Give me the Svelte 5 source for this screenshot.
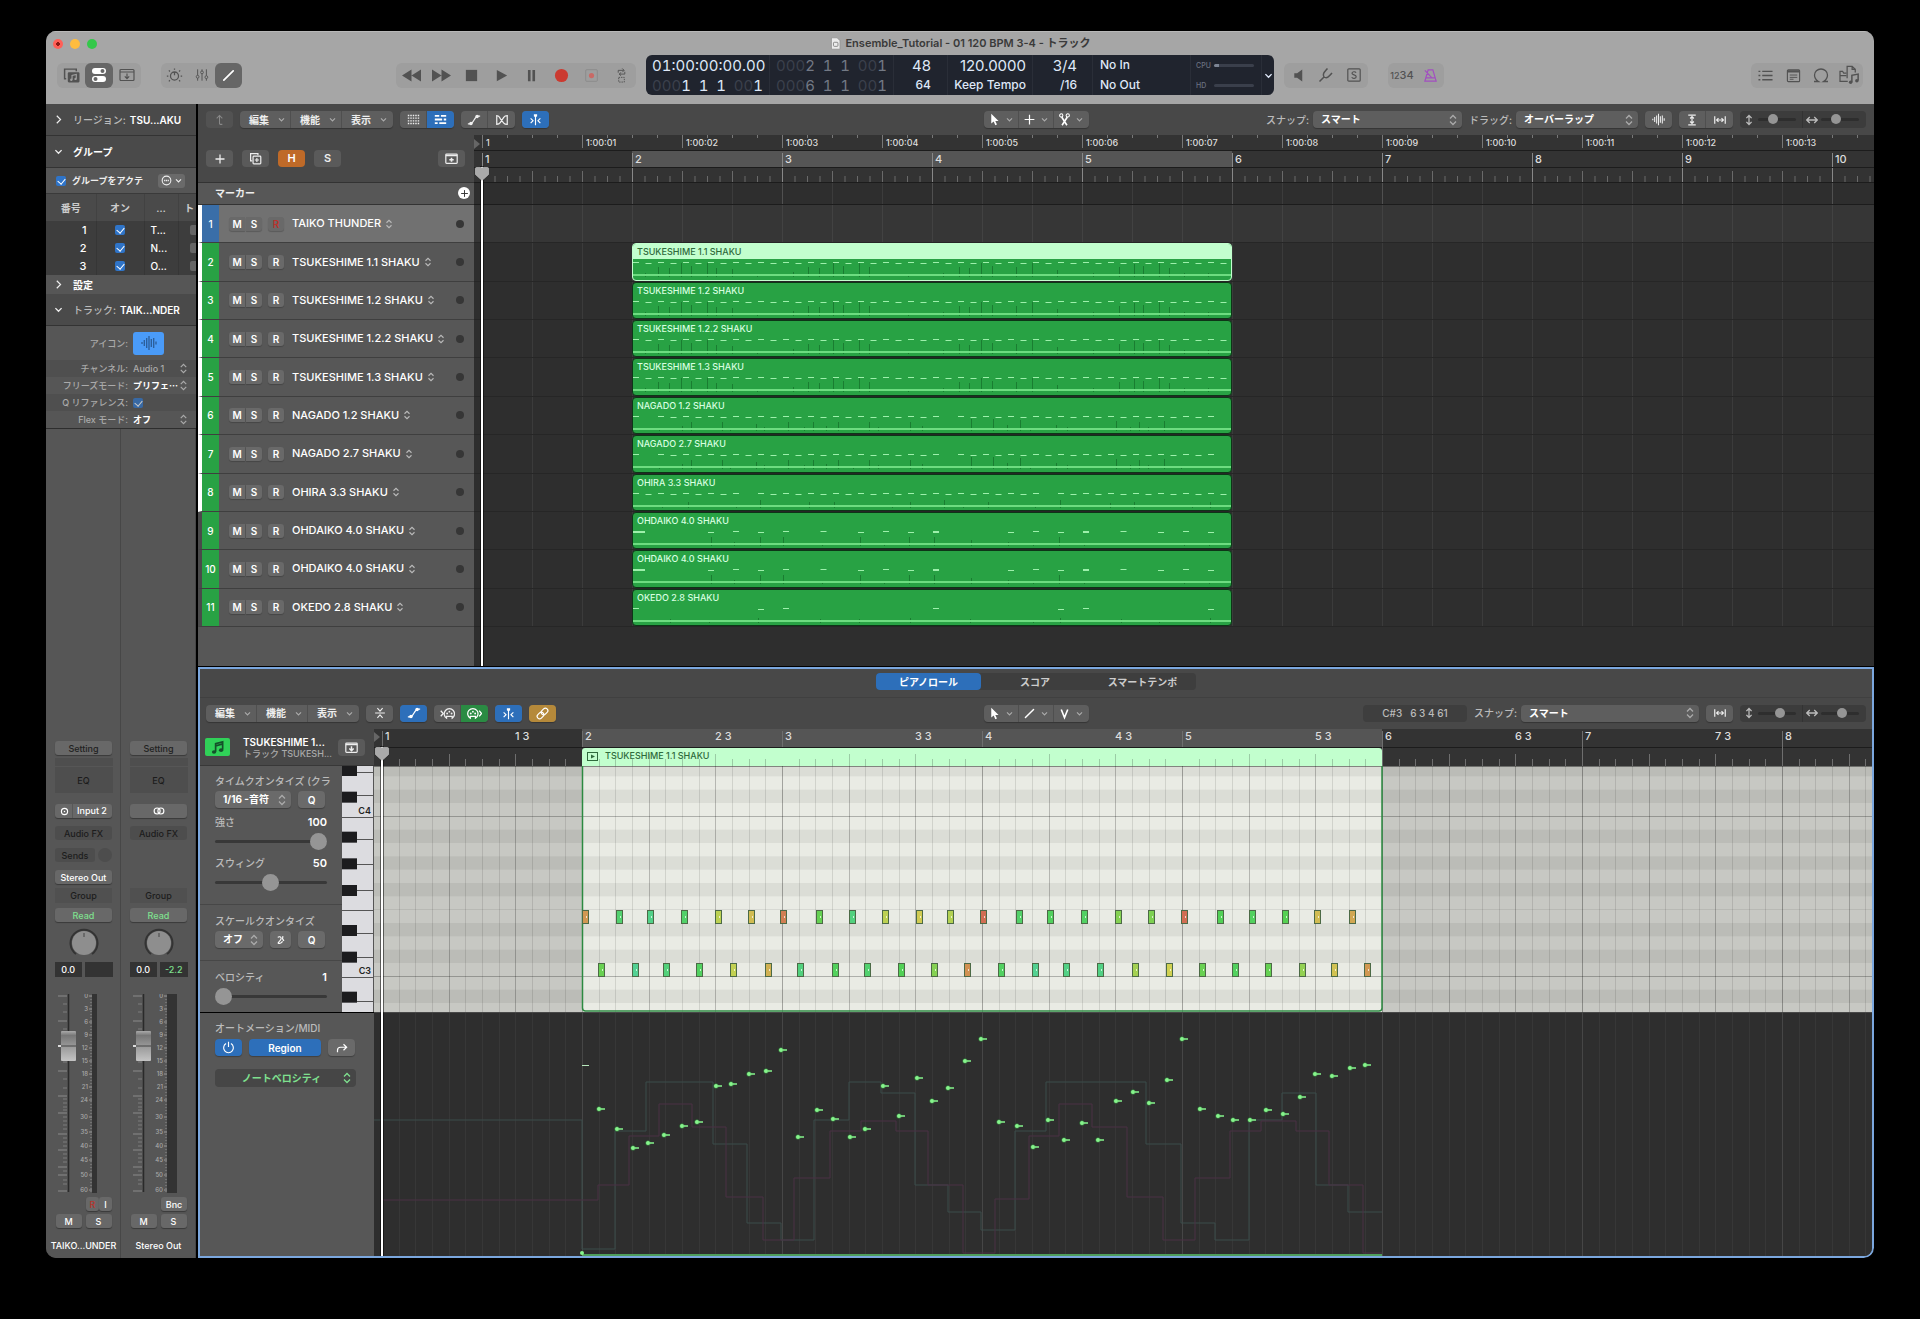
<script>
  // Arrange window: one beat is 50px, the first bar starts 8px into the lane
  const BEAT = 50;
  const ORIGIN = 8;
  // Piano roll: one bar is 200px
  const PR_BAR = 200;
  const PR_STEP = PR_BAR / 12;

  const range = (n) => Array.from({ length: n }, (_, i) => i);

  const icons = {
    chevDown: '<path d="M3.5 6l4.5 4.5L12.5 6" fill="none" stroke="currentColor" stroke-width="2"/>',
    chevRight: '<path d="M5.5 2.5L11 8l-5.5 5.5" fill="none" stroke="currentColor" stroke-width="1.7"/>',
    updown: '<path d="M4 6L8 2l4 4M4 10l4 4 4-4" fill="none" stroke="currentColor" stroke-width="1.7"/>',
    library: '<path d="M3 11H1.500V2h11v2" fill="none" stroke="currentColor" stroke-width="1.400"/><rect x="4.500" y="5" width="11" height="9.500" rx="1" fill="currentColor"/><path d="M8.500 12V8l4-1v4" fill="none" stroke="#a0a0a0" stroke-width="1.100"/><circle cx="7.800" cy="12" r="1.100" fill="#a0a0a0"/><circle cx="11.800" cy="11.200" r="1.100" fill="#a0a0a0"/>',
    inspector: '<rect x="1" y="1" width="14" height="6" rx="3" fill="currentColor"/><rect x="1" y="9" width="14" height="6" rx="3" fill="currentColor"/><circle cx="11.500" cy="4" r="2" fill="#666"/><circle cx="4.500" cy="12" r="2" fill="#666"/>',
    tray: '<rect x="1" y="2.500" width="14" height="11" rx="1" fill="none" stroke="currentColor" stroke-width="1.200"/><path d="M1 5h14M8 6.500v5M5.800 9.400L8 11.600l2.200-2.200" fill="none" stroke="currentColor" stroke-width="1.200"/>',
    dial: '<circle cx="8" cy="8.500" r="3.800" fill="none" stroke="currentColor" stroke-width="1.200"/><path d="M8 4.700v3M8 1.500v1.200M2.700 3.200l1 1M13.300 3.200l-1 1M.8 8.500h1.400M15.200 8.500h-1.400M2.700 13.500l1-1M13.300 13.500l-1-1" stroke="currentColor" stroke-width="1.200"/>',
    mixer: '<path d="M3 1.500v13M8 1.500v13M13 1.500v13" stroke="currentColor" stroke-width="1.100"/><g fill="#9e9e9e" stroke="currentColor"><circle cx="3" cy="10" r="1.600"/><circle cx="8" cy="5" r="1.600"/><circle cx="13" cy="10.500" r="1.600"/></g>',
    pencil: '<path d="M3 13L13 3" stroke="currentColor" stroke-width="1.800" stroke-linecap="round"/>',
    rewind: '<path d="M8 3v10L0 8zM16 3v10L8 8z" fill="currentColor"/>',
    forward: '<path d="M0 3v10l8-5zM8 3v10l8-5z" fill="currentColor"/>',
    stop: '<rect x="2" y="2" width="12" height="12" fill="currentColor"/>',
    play: '<path d="M3 2v12L14 8z" fill="currentColor"/>',
    pause: '<path d="M4.200 2h2.800v12H4.200zM9 2h2.800v12H9z" fill="currentColor"/>',
    record: '<circle cx="8" cy="8" r="7" fill="#cb3a30"/>',
    capture: '<rect x="1.800" y="1.800" width="12.400" height="12.400" rx="1" fill="none" stroke="#8b8b8b"/><circle cx="8" cy="8" r="2.800" fill="#c96a66"/>',
    cycle: '<path d="M4.500 5V2.500h6M8.800.5l2 2-2 2M11.500 4v2.500h-6M7.500 4.800L5.500 6.500l2 1.700" fill="none" stroke="currentColor" stroke-width="1"/><rect x="5" y="10" width="6" height="5" fill="none" stroke="currentColor" stroke-dasharray="1.500 1"/>',
    speaker: '<path d="M3.500 5.500h3L12 1.500v13L6.500 10.500h-3z" fill="currentColor"/>',
    fork: '<path d="M1.500 14.500L6 10M6 10C4 7 6.500 5 9.500 1.500M6 10c3 2 5-.5 8-4" fill="none" stroke="currentColor" stroke-width="1.500"/>',
    solo: '<rect x="1.800" y="1.800" width="12.400" height="12.400" rx="1" fill="none" stroke="currentColor" stroke-width="1.200"/><path d="M10 5.700C9.300 4.200 6 4.500 6 6.300 6 8.400 10.200 7.400 10.200 9.700c0 2-3.700 2.200-4.400.4" fill="none" stroke="currentColor" stroke-width="1.200"/>',
    metronome: '<path d="M5.500 2h5l3.500 12H2zM3.300 10.500h9.400M2 2.500l7.500 8" fill="none" stroke="currentColor" stroke-width="1.300"/>',
    list: '<path d="M.5 3.500h2M.5 8h2M.5 12.500h2M4.500 3.500h11M4.500 8h11M4.500 12.500h11" stroke="currentColor" stroke-width="1.400"/>',
    note: '<rect x="1.500" y="2" width="13" height="12.500" rx="1" fill="none" stroke="currentColor" stroke-width="1.200"/><path d="M1.500 3.500h13" stroke="currentColor" stroke-width="2.400"/><path d="M4 7.500h8M4 10h8M4 12h4" stroke="currentColor"/>',
    loop: '<path d="M1 14.500h4.500c-2.500-1.500-4-3.500-4-6.500a6.500 6 0 0113 0c0 3-1.500 5-4 6.500H15" fill="none" stroke="currentColor" stroke-width="1.300"/>',
    browser: '<path d="M7 13H.8V5h2l1 1.500H6M.8 8.500H6" fill="none" stroke="currentColor" stroke-width="1"/><path d="M6.500 10.500V1h4l2.500 2.500V6M10.500 1v2.500H13" fill="none" stroke="currentColor" stroke-width="1"/><path d="M10.300 13.500V8.300l5-1v5" fill="none" stroke="currentColor" stroke-width="1.200"/><circle cx="9.300" cy="13.700" r="1.400" fill="currentColor"/><circle cx="14.300" cy="12.500" r="1.400" fill="currentColor"/>',
    up: '<path d="M11.500 14H9.500A1.500 1.500 0 018 12.500V3M4.500 6.500L8 3l3.500 3.500" fill="none" stroke="currentColor" stroke-width="1.300"/>',
    dots: '<path d="M1 3h14M1 6.300h14M1 9.700h14M1 13h14" stroke="currentColor" stroke-width="1.800" stroke-dasharray="1.800 1.250"/>',
    lines: '<path d="M1 3.500h5.500M8.500 3.500H15M1 8h9M12 8h3M1 12.500h3.500M6.500 12.500H15" stroke="currentColor" stroke-width="2.200"/>',
    curve: '<path d="M1 12.500h2.500C8 12.500 8 4 12.500 3.500H15" fill="none" stroke="currentColor" stroke-width="1.400"/><circle cx="4.500" cy="12" r="2" fill="currentColor"/><circle cx="11.500" cy="4" r="2" fill="currentColor"/>',
    flex: '<path d="M2 13V3c3 0 3 1.500 4 3.500l4 5c1 1.200 2 1.500 4 1.500V3c-2 0-3 .5-4 2l-4 6c-1 1.500-2 2-4 2z" fill="none" stroke="currentColor" stroke-width="1.400"/>',
    catch: '<path d="M6 1.500h4V4L8 5.500 6 4z" fill="currentColor"/><path d="M8 5v10M2 6.500L5 9.500 2 12.500M14 6.500l-3 3 3 3" fill="none" stroke="currentColor" stroke-width="1.400"/>',
    pointer: '<path d="M4 1v12l3-2.600L9 15l2-.9-2-4.400h4z" fill="currentColor"/>',
    cross: '<path d="M8 2v12M2 8h12" stroke="currentColor" stroke-width="1.500"/>',
    scissors: '<path d="M4.500 5L11 15M11.500 5L5 15" stroke="currentColor" stroke-width="2"/><g fill="none" stroke="currentColor" stroke-width="1.300"><circle cx="4" cy="3" r="2"/><circle cx="12" cy="3" r="2"/></g>',
    velTool: '<path d="M4 3l4 10 4-10" fill="none" stroke="currentColor" stroke-width="2"/>',
    wave: '<path d="M1 7v2M3.300 5v6M5.700 3v10M8 1v14M10.300 4v8M12.700 3v10M15 6.500v3" stroke="currentColor" stroke-width="1.300"/>',
    fitV: '<path d="M3 1.500h10M3 14.500h10M8 4v8M5.500 6L8 3.500 10.500 6M5.500 10L8 12.500l2.500-2.500" fill="none" stroke="currentColor" stroke-width="1.600"/>',
    fitH: '<path d="M1 3v10M15 3v10M3.500 8h9M6 5.500L3.500 8 6 10.500M10 5.500L12.500 8 10 10.500" fill="none" stroke="currentColor" stroke-width="1.600"/>',
    arrowV: '<path d="M8 2v12M4.500 5.500L8 2l3.500 3.500M4.500 10.500L8 14l3.500-3.500" fill="none" stroke="currentColor" stroke-width="1.700"/>',
    arrowH: '<path d="M1 8h14M5 4L1 8l4 4M11 4l4 4-4 4" fill="none" stroke="currentColor" stroke-width="1.700"/>',
    plus: '<path d="M8 2v12M2 8h12" stroke="currentColor" stroke-width="1.700"/>',
    duplicate: '<path d="M4 11H2V2h9v2" fill="none" stroke="currentColor" stroke-width="1.500"/><rect x="5" y="5" width="9.500" height="9.500" rx="1" fill="none" stroke="currentColor" stroke-width="1.500"/><path d="M9.700 7.300v5M7.200 9.800h5" stroke="currentColor" stroke-width="1.400"/>',
    trayUp: '<rect x="1" y="2.500" width="14" height="11.500" rx="1" fill="none" stroke="currentColor" stroke-width="1.500"/><path d="M1 4.500h14" stroke="currentColor" stroke-width="1.500"/><path d="M8 7v5M5.300 9.500h5.400" stroke="currentColor" stroke-width="2"/>',
    trayDown: '<rect x="1" y="2.500" width="14" height="11.500" rx="1" fill="none" stroke="currentColor" stroke-width="1.500"/><path d="M1 4.500h14" stroke="currentColor" stroke-width="1.500"/><path d="M8 6.500v5M5.300 9.200L8 12l2.700-2.800" fill="none" stroke="currentColor" stroke-width="1.800"/>',
    more: '<circle cx="8" cy="8" r="6.300" fill="none" stroke="currentColor" stroke-width="1.600"/><path d="M4.500 8h7" stroke="currentColor" stroke-width="2" stroke-dasharray="1.800 .8"/>',
    collapse: '<path d="M1.500 8h13M4.500 1.500L8 5.500l3.500-4M4.500 14.500L8 10.500l3.500 4" fill="none" stroke="currentColor" stroke-width="1.500"/>',
    midiIn: '<path d="M.8 5l2.700 3-2.700 3" fill="none" stroke="currentColor" stroke-width="1.400"/><path d="M7 13A5.500 5.500 0 1113 13V11H7z" fill="none" stroke="currentColor" stroke-width="1.300"/><circle cx="7.600" cy="8" r="1" fill="currentColor"/><circle cx="10" cy="6" r="1" fill="currentColor"/><circle cx="12.400" cy="8" r="1" fill="currentColor"/>',
    midiOut: '<path d="M13 5l2.500 3L13 11" fill="none" stroke="currentColor" stroke-width="1.400"/><path d="M3.500 13A5.500 5.500 0 119 13V11H3.500z" fill="none" stroke="currentColor" stroke-width="1.300"/><circle cx="4" cy="8" r="1" fill="currentColor"/><circle cx="6.300" cy="6" r="1" fill="currentColor"/><circle cx="8.700" cy="8" r="1" fill="currentColor"/>',
    link: '<g fill="none" stroke="currentColor" stroke-width="1.500" transform="rotate(-45 8 8)"><rect x="0" y="5" width="9" height="6" rx="3"/><rect x="7" y="5" width="9" height="6" rx="3"/></g>',
    power: '<path d="M5 3.200a6 6 0 106 0M8 1v6.500" fill="none" stroke="currentColor" stroke-width="1.400"/>',
    share: '<path d="M2 13.500V11c0-2.500 1.500-4 4-4h8M10 3l4.200 4L10 11" fill="none" stroke="currentColor" stroke-width="1.600"/>',
    stereo: '<g fill="none" stroke="currentColor" stroke-width="1.500"><circle cx="5.500" cy="8" r="4"/><circle cx="10.500" cy="8" r="4"/></g>',
    mono: '<circle cx="8" cy="8" r="5.500" fill="none" stroke="currentColor" stroke-width="2"/><circle cx="8" cy="8" r="1.300" fill="currentColor"/>',
    notes: '<path d="M6 12.500V4l7.500-2v8.500M6 6.300l7.500-2" fill="none" stroke="currentColor" stroke-width="1.800"/><ellipse cx="4.300" cy="12.800" rx="2.300" ry="1.900" fill="currentColor"/><ellipse cx="11.800" cy="10.800" rx="2.300" ry="1.900" fill="currentColor"/>',
    accent: '<path d="M4 5c2-2 5-1 5 1.500S6 10 4.500 13c2 1.500 6.500 0 6-3M11.500 3l-.5 4 2 3" fill="none" stroke="currentColor" stroke-width="1.600"/>',
    doc: '<path d="M3 1h7l3.500 3.500V15H3z" fill="#ececec" stroke="#8a8a8a" stroke-width=".8"/><rect x="5.500" y="6.500" width="5.500" height="5" rx="1" fill="none" stroke="#777"/>'
  };

  // mini-notes for region previews: [16th-note slot, low row, width]
  const all = range(48);
  const skip = (...gone) => all.filter((i) => !gone.includes(i));
  const alternate = (slots) => slots.map((s) => [s, s % 2]);
  const shime = {
    notes: alternate(all),
    ticks: [[12,4],[25,10],[36,9],[48,14],[58,11],[74,14],[83,9],[99,8],[124,2],[160,5],[175,10],[186,9],[200,14],[210,11],[226,14],[236,10],[275,3],[310,4],[326,10],[336,9],[348,14],[359,11],[383,10],[399,14],[424,7],[460,4],[486,10],[501,13],[510,11],[526,14],[536,9],[551,4],[575,4]]
  };
  const nagado = {
    notes: alternate(skip(1, 25, 47)),
    ticks: [[26,3],[49,5],[58,9],[89,9],[97,3],[123,7],[131,4],[155,9],[171,4],[180,9],[193,5],[205,9],[220,3],[236,9],[245,4],[277,9],[289,5],[338,12],[360,12],[374,6],[387,11],[397,3],[423,6],[434,4],[483,10],[497,4],[506,9],[515,4],[531,10],[548,3]]
  };
  const ohira = {
    notes: alternate(skip(9, 33)),
    ticks: [[29,3],[55,6],[103,3],[127,8],[176,6],[201,6],[259,3],[277,6],[311,8],[330,3],[355,6],[402,3],[427,8],[477,5],[501,6],[559,3],[577,6]]
  };
  const ohdaiko = {
    notes: [[0,0,12],[0,1,12],[6,1],[8,0],[10,1],[12,0],[15,0],[18,1],[20,0],[22,1],[24,0],[24,1],[30,1],[32,0],[34,1],[36,0],[36,1],[39,0],[42,1],[44,0],[46,1]],
    ticks: [[78,9],[101,4],[127,9],[150,9],[189,3],[227,9],[251,3],[276,9],[301,9],[338,6],[375,4],[400,3],[426,9],[451,2],[551,3],[576,3]]
  };
  const okedo = {
    notes: [[0,0],[10,1],[12,0],[24,0],[34,1],[36,0],[46,1]],
    ticks: [[37,4],[76,3],[125,5],[187,4],[226,4],[277,5],[337,4],[400,3],[427,5],[488,4],[526,3],[577,5]]
  };

  const tracks = [
    { name: 'TAIKO THUNDER', armed: true },
    { name: 'TSUKESHIME 1.1 SHAKU', region: shime },
    { name: 'TSUKESHIME 1.2 SHAKU', region: shime },
    { name: 'TSUKESHIME 1.2.2 SHAKU', region: shime },
    { name: 'TSUKESHIME 1.3 SHAKU', region: shime },
    { name: 'NAGADO 1.2 SHAKU', region: nagado },
    { name: 'NAGADO 2.7 SHAKU', region: nagado },
    { name: 'OHIRA 3.3 SHAKU', region: ohira },
    { name: 'OHDAIKO 4.0 SHAKU', region: ohdaiko },
    { name: 'OHDAIKO 4.0 SHAKU', region: ohdaiko },
    { name: 'OKEDO 2.8 SHAKU', region: okedo }
  ];

  // [start, velocity lane y]; notes alternate between E3 and C3
  const notes = [
    [200,52],[216,96],[234,116],[250,135],[265,130],[281,122],[299,113],[314,109],[333,73],[348,71],[366,61],[383,58],
    [398,37],[415,124],[434,97],[450,106],[467,124],[482,116],[500,73],[516,103],[534,65],[549,88],[565,75],[582,48],
    [598,26],[616,109],[634,113],[650,134],[665,107],[681,127],[699,110],[715,127],[733,88],[750,79],[766,90],[784,67],
    [799,26],[817,96],[835,103],[850,107],[867,107],[883,97],[900,101],[917,84],[932,61],[949,63],[967,55],[982,52]
  ].map(([x, y]) => ({ x: x + ORIGIN, y }));

  function noteColor(y) {
    let hue = 122 + (y - 103) * 0.9;
    if (y < 54) hue = 13 + (y - 26) * 0.75;
    else if (y < 103) hue = 38 + (y - 54) * 1.7;
    return `hsl(${Math.round(hue)}, 58%, 57%)`;
  }

  const tealCurve = 'M0 107H208V236H241V118H272V69H339V131H373V210H407V227H440V107H475V69H507V80H541V172H574V199H607V217H641V118H672V69H772V131H807V210H841V227H875V107H908V80H942V172H974V199H1008';
  const pinkCurve = 'M8 187H224V172H255V123H285V91H318V114H352V184H389V227H420V165H456V118H487V108H522V118H554V172H589V240H621V186H655V123H685V91H718V114H753V184H789V227H821V165H856V118H887V108H922V118H955V172H989V240H1008';

  // semitone rows from the top edge down, black keys marked
  const SEMI = 40 / 3;
  const scale = [1, 0, 1, 0, 0, 1, 0, 1, 0, 1, 0, 0, 1, 0, 1, 0, 0, 1, 0];
  const rows = scale.map((black, i) => ({ black, y: i * SEMI - 3 }));
  const whiteEdges = [6, 29, 51, 73, 98, 124, 144, 167, 191, 211, 235];

  const faderLong = [2, 27, 52, 77, 102, 119, 140, 156, 173, 181, 197];
  const faderShort = [10, 18, 35, 43, 60, 68, 85, 94, 105, 109, 113, 116, 123, 127, 131, 135, 144, 148, 152, 160, 164, 168, 177, 186, 190];
  const meterMarks = [[0, 2], [3, 15], [6, 28], [9, 41], [12, 54], [15, 67], [18, 80], [21, 93], [24, 106], [30, 123], [35, 138], [40, 152], [45, 166], [50, 181], [60, 196]];

  const channels = [
    { name: 'TAIKO...UNDER', input: 'Input 2', peak: '', sends: true, meter: 5 },
    { name: 'Stereo Out', peak: '-2.2', meter: 10 }
  ];
  const groups = [[1, 'T...'], [2, 'N...'], [3, 'O...']];
  const menus = ['編集', '機能', '表示'];
</script>

{#snippet icon(name, size = 14)}
  <svg class="icon" viewBox="0 0 16 16" width={size} height={size} aria-hidden="true">{@html icons[name]}</svg>
{/snippet}

{#snippet menuBar()}
  <div class="seg">
    {#each menus as m}
      <button class="menu">{m}{@render icon('chevDown', 9)}</button>
    {/each}
  </div>
{/snippet}

{#snippet tools(list)}
  <div class="seg tools">
    {#each list as t}
      <button aria-label={t}>{@render icon(t, 13)}{@render icon('chevDown', 9)}</button>
    {/each}
  </div>
{/snippet}

{#snippet zoomers(v, h)}
  <div class="zoomers">
    <label>{@render icon('arrowV', 12)}<input type="range" class="small" value={v} aria-label="縦ズーム"></label>
    <label>{@render icon('arrowH', 12)}<input type="range" class="small" value={h} aria-label="横ズーム"></label>
  </div>
{/snippet}

{#snippet playhead()}
  <div class="playhead">
    <svg viewBox="0 0 14 14" width="14" height="14"><path d="M1.500.5h11q1 0 1 1v6L7 13.500.5 7.500v-6q0-1 1-1z" fill="#a9a9a9" stroke="#ccc" stroke-width=".6"/></svg>
  </div>
{/snippet}

<div class="window">
  <header>
    <div class="titlebar">
      <div class="lights"><i class="close"></i><i class="min"></i><i class="max"></i></div>
      <h1>{@render icon('doc', 13)}Ensemble_Tutorial - 01 120 BPM 3-4 - トラック</h1>
    </div>
    <div class="controls">
      <div class="side">
        <div class="tgroup">
          <button aria-label="ライブラリ">{@render icon('library', 17)}</button>
          <button class="on" aria-label="インスペクタ">{@render icon('inspector', 16)}</button>
          <button aria-label="ツールバー">{@render icon('tray', 16)}</button>
        </div>
        <div class="tgroup second">
          <button aria-label="Smart Control">{@render icon('dial', 17)}</button>
          <button aria-label="ミキサー">{@render icon('mixer', 14)}</button>
          <button class="on" aria-label="エディタ">{@render icon('pencil', 15)}</button>
        </div>
        <div class="tgroup transport">
          {#each ['rewind', 'forward', 'stop', 'play', 'pause', 'record', 'capture', 'cycle'] as t}
            <button aria-label={t}>{@render icon(t, t === 'rewind' || t === 'forward' ? 19 : 15)}</button>
          {/each}
        </div>
      </div>

      <div class="lcd">
        <div class="time">
          <div class="big">01:00:00:00.00</div>
          <div class="pos"><span><s>000</s>1</span><span>1</span><span>1</span><span><s>00</s>1</span></div>
        </div>
        <div class="time dim">
          <div class="pos"><span><s>000</s>2</span><span>1</span><span>1</span><span><s>00</s>1</span></div>
          <div class="pos"><span><s>000</s>6</span><span>1</span><span>1</span><span><s>00</s>1</span></div>
        </div>
        <div class="right"><div class="big">48</div><div>64</div></div>
        <div class="right tempo"><div class="big">120.0000</div><div>Keep Tempo</div></div>
        <div class="right sig"><div class="big">3/4</div><div>/16</div></div>
        <div class="midi"><div>No In</div><div>No Out</div></div>
        <div class="load"><div>CPU<b class="some"></b></div><div>HD<b></b></div></div>
        <button aria-label="表示モード">{@render icon('chevDown', 11)}</button>
      </div>

      <div class="side">
        <div class="tgroup wide">
          <button aria-label="音量">{@render icon('speaker', 15)}</button>
          <button aria-label="チューナー">{@render icon('fork', 16)}</button>
          <button aria-label="ソロ">{@render icon('solo', 16)}</button>
        </div>
        <div class="tgroup count">
          <button><small>12</small>34</button>
          <button class="purple" aria-label="メトロノーム">{@render icon('metronome', 15)}</button>
        </div>
        <div class="tgroup wide last">
          <button aria-label="リスト">{@render icon('list', 15)}</button>
          <button aria-label="ノートパッド">{@render icon('note', 15)}</button>
          <button aria-label="ループ">{@render icon('loop', 16)}</button>
          <button aria-label="ブラウザ">{@render icon('browser', 20)}</button>
        </div>
      </div>
    </div>
  </header>

  <div class="main">
    <aside>
      <div class="fold">{@render icon('chevRight', 11)}<span>リージョン:</span><b>TSU...AKU</b></div>
      <div class="fold">{@render icon('chevDown', 11)}<b>グループ</b></div>
      <div class="activate">
        <label><input type="checkbox" checked>グループをアクテ</label>
        <button aria-label="グループメニュー">{@render icon('more', 11)}{@render icon('chevDown', 9)}</button>
      </div>
      <table>
        <thead><tr><th>番号</th><th>オン</th><th>…</th><th>ト</th></tr></thead>
        <tbody>
          {#each groups as [n, label]}
            <tr>
              <td class="num">{n}</td>
              <td><input type="checkbox" checked aria-label="グループ{n}"></td>
              <td class="abbr">{label}</td>
              <td><input type="checkbox" class="empty" aria-label="非表示{n}"></td>
            </tr>
          {/each}
        </tbody>
      </table>
      <div class="fold low">{@render icon('chevRight', 11)}<b>設定</b></div>
      <div class="fold trackfold">{@render icon('chevDown', 11)}<span>トラック:</span><b>TAIK...NDER</b></div>
      <div class="props">
        <div class="prop iconrow"><span>アイコン:</span><button aria-label="アイコン">{@render icon('wave', 16)}</button></div>
        <div class="prop odd"><span>チャンネル:</span><em class="off">Audio 1</em>{@render icon('updown', 11)}</div>
        <div class="prop"><span>フリーズモード:</span><em>プリフェ⋯</em>{@render icon('updown', 11)}</div>
        <label class="prop odd"><span>Q リファレンス:</span><input type="checkbox" checked class="faded"></label>
        <div class="prop"><span>Flex モード:</span><em>オフ</em>{@render icon('updown', 11)}</div>
      </div>

      <div class="mixer">
        {#each channels as ch}
          <div class="channel">
            <button class="slot dull">Setting</button>
            <div class="eqthin"></div>
            <div class="eq">EQ</div>
            {#if ch.input}
              <button class="slot split">{@render icon('mono', 9)}<span>{ch.input}</span></button>
            {:else}
              <button class="slot" aria-label="ステレオ">{@render icon('stereo', 12)}</button>
            {/if}
            <button class="slot dark fx">Audio FX</button>
            <div class="sends">
              {#if ch.sends}
                <div class="sendrow"><button class="slot dark">Sends</button><i></i></div>
                <button class="slot">Stereo Out</button>
              {/if}
            </div>
            <button class="slot group">Group</button>
            <button class="slot read">Read</button>
            <svg class="knob" width="30" height="30" viewBox="0 0 30 30">
              <path d="M7 26A13.500 13.500 0 1123 26" fill="none" stroke="#333" stroke-width="2"/>
              <circle cx="15" cy="15" r="12" fill="#8e8e8e"/><path d="M15 5v4" stroke="#444"/>
            </svg>
            <div class="values"><span>0.0</span><span class="peak">{ch.peak}</span></div>
            <svg class="fader" width="58" height="199" viewBox="0 0 58 199">
              {#each faderLong as y}<path d="M3 {y}h9" stroke="#8a8a8a"/>{/each}
              {#each faderShort as y}<path d="M8 {y}h4" stroke="#7c7c7c"/>{/each}
              <path d="M13.500 0v198" stroke="#2a2a2a" stroke-width="1.500"/>
              {#each meterMarks as [label, y]}
                <text x="33" y={y + 2} text-anchor="end">{label}</text>
                <path d="M34 {y}h3" stroke="#999"/>
              {/each}
              <path d="M36 2v196" stroke="#7c7c7c" stroke-dasharray="1 2" stroke-width="1.500"/>
              <rect x="37" y="0" width={ch.meter} height="199" fill="#333"/>
              <path d="M3 52h4" stroke="#fff" stroke-width="1.500"/>
              <rect x="6" y="37" width="15" height="30" rx="1" fill="url(#cap{ch.meter})"/>
              <path d="M6 52h15" stroke="#444"/>
              <defs>
                <linearGradient id="cap{ch.meter}" x1="0" y1="0" x2="0" y2="1">
                  <stop offset="0" stop-color="#aaa"/><stop offset=".15" stop-color="#777"/>
                  <stop offset=".5" stop-color="#989898"/><stop offset="1" stop-color="#c4c4c4"/>
                </linearGradient>
              </defs>
            </svg>
            <div class="rec">
              {#if ch.sends}<button class="red">R</button><button>I</button>{:else}<button>Bnc</button>{/if}
            </div>
            <div class="ms"><button>M</button><button>S</button></div>
            <div class="chname">{ch.name}</div>
          </div>
        {/each}
      </div>
    </aside>

    <div class="content">
      <section class="arrange">
        <div class="toolbar">
          <div class="left">
            <div class="seg ghost"><button aria-label="上の階層">{@render icon('up', 13)}</button></div>
            {@render menuBar()}
            <div class="seg"><button aria-label="グリッド">{@render icon('dots', 13)}</button><button class="blue" aria-label="トラック表示">{@render icon('lines', 13)}</button></div>
            <div class="seg"><button aria-label="オートメーション">{@render icon('curve', 14)}</button><button aria-label="Flex">{@render icon('flex', 14)}</button></div>
            <div class="seg"><button class="blue" aria-label="キャッチ">{@render icon('catch', 13)}</button></div>
          </div>
          {@render tools(['pointer', 'cross', 'scissors'])}
          <div class="end">
            <label class="pick">スナップ:<span class="select snap"><select><option>スマート</option></select>{@render icon('updown', 12)}</span></label>
            <label class="pick">ドラッグ:<span class="select drag"><select><option>オーバーラップ</option></select>{@render icon('updown', 12)}</span></label>
            <div class="seg"><button aria-label="波形">{@render icon('wave', 13)}</button></div>
            <div class="seg"><button aria-label="縦に合わせる">{@render icon('fitV', 12)}</button><button aria-label="横に合わせる">{@render icon('fitH', 12)}</button></div>
            {@render zoomers(35, 36)}
          </div>
        </div>

        <div class="arrange-body">
          <div class="heads">
            <div class="headtools">
              <button aria-label="トラック追加">{@render icon('plus', 12)}</button>
              <button aria-label="複製">{@render icon('duplicate', 13)}</button>
              <button class="orange">H</button>
              <button>S</button>
              <button class="far" aria-label="トラックヘッダ">{@render icon('trayUp', 13)}</button>
            </div>
            <div class="marker">マーカー<button aria-label="マーカー追加">{@render icon('plus', 9)}</button></div>
            <div class="list">
              {#each tracks as t, i}
                <div class="track" class:selected={i === 0} class:grouped={i < 8}>
                  <span class="no" class:audio={i === 0}>{i + 1}</span>
                  <div class="msr"><button>M</button><button>S</button></div>
                  <button class="rec1" class:red={t.armed}>R</button>
                  <span class="tname">{t.name}</span>
                  {@render icon('updown', 10)}
                  <i></i>
                </div>
              {/each}
            </div>
          </div>

          <div class="lanes">
            <svg class="ruler" width="100%" height="70">
              <rect width="100%" height="48" fill="#333"/>
              <rect y="48" width="100%" height="22" fill="#2e2e2e"/>
              <rect x={ORIGIN + 3 * BEAT} y="16" width={12 * BEAT} height="16" fill="#555"/>
              <path d="M0 4l6 5-6 5z" fill="#666"/>
              {#each range(120) as i}
                {@const x = ORIGIN + i * 25 + 0.5}
                <path d="M{x} 0v{i % 4 ? 3 : 13}" stroke="#777"/>
              {/each}
              {#each range(14) as i}
                <text class="sec" x={ORIGIN + 4 + i * 100} y="11">{i ? `1:00:${String(i).padStart(2, '0')}` : '1'}</text>
              {/each}
              {#each range(240) as i}
                {@const x = ORIGIN + i * 12.5 + 0.5}
                <path d="M{x} {i % 12 === 0 ? 18 : i % 4 === 0 ? 36 : 41}V{i % 4 ? 47 : 48}" stroke={i % 12 ? '#6a6a6a' : '#888'}/>
              {/each}
              {#each range(60) as i}
                <path d="M{ORIGIN + i * BEAT + 0.5} 48v22" stroke={i % 3 ? '#3c3c3c' : '#505050'}/>
              {/each}
              {#each range(10) as i}
                <text class="bar" x={ORIGIN + 3 + i * 3 * BEAT} y="28">{i + 1}</text>
              {/each}
              <path d="M0 15.500h9999M0 32.500h9999M0 47.500h9999M0 69.500h9999" stroke="#1c1c1c"/>
            </svg>
            <div class="grid">
              {#each tracks as t, i}
                <div class="lane" class:selected={i === 0}>
                  {#if t.region}
                    <div class="region" class:active={i === 1} style="margin-left: {ORIGIN + 3 * BEAT}px; width: {12 * BEAT}px">
                      <span>{t.name}</span>
                      <svg width="600" height="19">
                        {#each t.region.ticks as [x, h]}<path d="M{x + 0.5} {18 - h}V18" stroke="#16702b" opacity=".75"/>{/each}
                        {#each t.region.notes as [s, low, w]}
                          <rect x={s * 12.5} y={3 + low} width={w ?? 6} height="1" fill="#9df0ab"/>
                        {/each}
                        <rect y="15" width="600" height="2" fill="#6ddc80"/>
                      </svg>
                    </div>
                  {/if}
                </div>
              {/each}
            </div>
            {@render playhead()}
          </div>
        </div>
      </section>

      <section class="editor">
        <div class="tabs">
          <div role="tablist">
            <button role="tab" aria-selected="true" class="current">ピアノロール</button>
            <button role="tab" aria-selected="false">スコア</button>
            <button role="tab" aria-selected="false">スマートテンポ</button>
          </div>
        </div>
        <div class="toolbar">
          <div class="left">
            {@render menuBar()}
            <div class="seg"><button aria-label="折りたたむ">{@render icon('collapse', 12)}</button></div>
            <div class="seg"><button class="blue" aria-label="オートメーション">{@render icon('curve', 14)}</button></div>
            <div class="seg"><button aria-label="MIDI入力">{@render icon('midiIn', 15)}</button><button class="green" aria-label="MIDI出力">{@render icon('midiOut', 15)}</button></div>
            <div class="seg"><button class="blue" aria-label="キャッチ">{@render icon('catch', 13)}</button></div>
            <div class="seg"><button class="gold" aria-label="リンク">{@render icon('link', 13)}</button></div>
          </div>
          {@render tools(['pointer', 'pencil', 'velTool'])}
          <div class="end">
            <output>C#3&nbsp;&nbsp; 6 3 4 61</output>
            <label class="pick">スナップ:<span class="select snap2"><select><option>スマート</option></select>{@render icon('updown', 12)}</span></label>
            <div class="seg"><button aria-label="横に合わせる">{@render icon('fitH', 12)}</button></div>
            {@render zoomers(62, 58)}
          </div>
        </div>

        <div class="editor-body">
          <div class="panel">
            <div class="regionhead">
              <span class="badge">{@render icon('notes', 15)}</span>
              <div><b>TSUKESHIME 1...</b><small>トラック TSUKESH...</small></div>
              <button aria-label="表示">{@render icon('trayDown', 13)}</button>
            </div>
            <div class="quant">
              <div class="params">
                <div class="block first">
                  <div class="lab">タイムクオンタイズ (クラ</div>
                  <div class="line">
                    <span class="select q16"><select aria-label="タイムクオンタイズ"><option>1/16 -音符</option></select>{@render icon('updown', 12)}</span>
                    <button>Q</button>
                  </div>
                  <label><span class="lab">強さ<b>100</b></span><input type="range" class="wide" value="100"></label>
                  <label><span class="lab">スウィング<b>50</b></span><input type="range" class="wide" value="49"></label>
                </div>
                <div class="block second">
                  <div class="lab">スケールクオンタイズ</div>
                  <div class="line">
                    <span class="select qoff"><select aria-label="スケールクオンタイズ"><option>オフ</option></select>{@render icon('updown', 12)}</span>
                    <button class="tiny" aria-label="音階">{@render icon('accent', 11)}</button>
                    <button>Q</button>
                  </div>
                </div>
                <div class="block third">
                  <label><span class="lab">ベロシティ<b>1</b></span><input type="range" class="wide" value="0"></label>
                </div>
              </div>
              <svg class="keys" width="32" height="246">
                <rect width="32" height="246" fill="#dcdce0"/>
                {#each whiteEdges as y}<path d="M0 {y + 0.5}h32" stroke="#555"/>{/each}
                {#each rows as r}
                  {#if r.black}<rect x="0" y={r.y + 2} width="15" height="11" fill="#1c1c1e"/>{/if}
                {/each}
                <text x="29" y="48" text-anchor="end">C4</text>
                <text x="29" y="208" text-anchor="end">C3</text>
                <rect x="31" width="1" height="246" fill="#555"/>
              </svg>
            </div>
            <div class="auto">
              <div class="lab">オートメーション/MIDI</div>
              <div class="line">
                <button class="blue" aria-label="オン">{@render icon('power', 13)}</button>
                <button class="blue reg">Region</button>
                <button aria-label="共有">{@render icon('share', 12)}</button>
              </div>
              <span class="select vel"><select aria-label="パラメータ"><option>ノートベロシティ</option></select>{@render icon('updown', 12)}</span>
            </div>
          </div>

          <div class="roll">
            <svg width="100%" height="37">
              <rect width="100%" height="37" fill="#333"/>
              <rect x={ORIGIN + PR_BAR} width={4 * PR_BAR} height="18" fill="#555"/>
              <path d="M0 18.500h9999" stroke="#1c1c1c"/>
              <path d="M{ORIGIN + PR_BAR} 37V22q0-3 3-3H{ORIGIN + 5 * PR_BAR - 3}q3 0 3 3V37z" fill="#c2ffce"/>
              {#each range(180) as i}
                {@const x = Math.round(ORIGIN + i * PR_STEP) + 0.5}
                {@const lit = i >= 12 && i < 60}
                <path d="M{x} {i % 12 === 0 ? 2 : i % 4 === 0 ? 25 : 30}V{i % 12 === 0 && lit ? 18 : 37}" stroke={lit && i % 12 ? '#9bcca5' : '#6e6e6e'}/>
              {/each}
              {#each range(8) as i}
                <text class="bar" x={ORIGIN + 3 + i * PR_BAR} y="11">{i + 1}</text>
                {#if i < 7}<text class="bar" x={ORIGIN + 133 + i * PR_BAR} y="11">{i + 1} 3</text>{/if}
              {/each}
              <path d="M0 3l6 5-6 5z" fill="#666"/>
              <rect x="213.500" y="23.500" width="10" height="8" fill="none" stroke="#2f6a3c"/>
              <path d="M217 25.500v4l4-2z" fill="#2f6a3c"/>
              <text class="clip" x="231" y="30">TSUKESHIME 1.1 SHAKU</text>
            </svg>
            <svg width="100%" height="246">
              <rect width="100%" height="246" fill="#c7c8c3"/>
              <rect x={ORIGIN + PR_BAR} width={4 * PR_BAR} height="246" fill="#e9ebe4"/>
              {#each rows as r}
                {#if r.black}<rect y={r.y} width="100%" height={SEMI} fill="#000" opacity=".06"/>{/if}
              {/each}
              <path d="M0 50.500h9999M0 210.500h9999" stroke="#000" opacity=".25"/>
              <path d="M0 143.500h9999" stroke="#000" opacity=".07"/>
              {#each range(180) as i}
                <path d="M{Math.round(ORIGIN + i * PR_STEP) + 0.5} 0v246" stroke="#000" opacity={i % 12 === 0 ? 0.3 : i % 4 === 0 ? 0.22 : 0.1}/>
              {/each}
              <path d="M0 .5h9999" stroke="#000" opacity=".4"/>
              <path d="M{ORIGIN + PR_BAR + 0.5} 0V242q0 3 3 3H{ORIGIN + 5 * PR_BAR - 3}q3 0 3-3V0" fill="none" stroke="#2c8a41" stroke-width="1.500"/>
              {#each notes as n, i}
                <rect x={n.x + 0.5} y={i % 2 ? 197.5 : 144.5} width="6" height="13" fill={noteColor(n.y)} stroke="#4c6a46"/>
                <rect x={n.x + 4} y={i % 2 ? 203 : 150} width="1" height="2" fill="#fff" opacity=".7"/>
              {/each}
            </svg>
            <svg class="velocity" width="100%" height="243">
              <rect width="100%" height="243" fill="#2e2e2e"/>
              {#each range(180) as i}
                <path d="M{Math.round(ORIGIN + i * PR_STEP) + 0.5} 0v243" stroke={i % 12 ? '#373737' : '#464646'}/>
              {/each}
              <path d={tealCurve} fill="none" stroke="#3a4c4b"/>
              <path d={pinkCurve} fill="none" stroke="#4a3044"/>
              {#each notes as n, i}
                {#if i === 0}
                  <path d="M{n.x} {n.y + 0.5}h7" stroke="#b9e8bd"/>
                {:else}
                  <circle cx={n.x + 1} cy={n.y} r="2.500" fill="#86f58c" stroke="#14301a" stroke-width=".6"/>
                  <path d="M{n.x + 3} {n.y}h4" stroke="#86f58c" stroke-width="1.500"/>
                {/if}
              {/each}
              <rect x={ORIGIN + PR_BAR} y="241" width={4 * PR_BAR} height="2" fill="#4f9f5c"/>
              <circle cx={ORIGIN + PR_BAR} cy="240" r="2" fill="#86f58c"/>
            </svg>
            {@render playhead()}
          </div>
        </div>
      </section>
    </div>
  </div>
</div>

<style>
  :global(body) {
    background: #000;
  }

  .window {
    margin: 31px 46px 61px;
    border-radius: 10px;
    overflow: hidden;
    background: #4a4a4a;
    color: #eee;
    font-family: Inter, 'Noto Sans CJK JP', sans-serif;
    font-size: 11px;
    line-height: 1;
    font-weight: 500;
  }

  .window :global(*) {
    box-sizing: border-box;
  }

  button, select, input {
    font: inherit;
    color: inherit;
    margin: 0;
    padding: 0;
    border: 0;
    background: none;
  }

  button {
    display: inline-flex;
    align-items: center;
    justify-content: center;
    white-space: nowrap;
  }

  svg {
    display: block;
    flex: none;
  }

  /* window header */
  header {
    background: #a6a6a6;
    height: 73px;
    border-top: 1px solid #b8b8b8;
    color: #525252;
  }

  .titlebar {
    height: 23px;
    position: relative;
    display: flex;
    align-items: center;
    justify-content: center;
  }

  .lights {
    position: absolute;
    left: 7px;
    display: flex;
    gap: 7px;
  }

  .lights i {
    width: 10px;
    height: 10px;
    border-radius: 50%;
  }

  .close { background: radial-gradient(#8a1a14 0 2px, #ff5f57 2px); }
  .min { background: #febc3f; }
  .max { background: #34c84a; }

  h1 {
    display: flex;
    align-items: center;
    gap: 3px;
    margin: 0;
    font-size: 11px;
    font-weight: 600;
    color: #3a3a3a;
  }

  .controls {
    display: grid;
    grid-template-columns: 1fr auto 1fr;
    gap: 10px;
    padding: 0 11px;
    height: 40px;
  }

  .side {
    display: flex;
    align-items: center;
  }

  .tgroup {
    display: flex;
    height: 25px;
    border-radius: 6px;
    background: #9e9e9e;
  }

  .tgroup button {
    width: 28px;
    border-radius: 6px;
  }

  .tgroup button.on {
    background: #666;
    color: #fff;
  }

  .tgroup.second { margin-left: 20px; }
  .tgroup.second button { width: 27px; }
  .tgroup.transport { margin-left: auto; }
  .tgroup.transport button { width: 30px; }
  .tgroup.last { margin-left: auto; }
  .tgroup.count { margin-left: 20px; }
  .tgroup.count small { font-size: 9px; }
  .tgroup .purple { color: #a24fc0; }

  .lcd {
    display: grid;
    grid-template-columns: 124px 124px 54px 85px 60px 98px 71px 12px;
    background: #20242e;
    border-radius: 6px;
    color: #dfe8f8;
    font-size: 12px;
  }

  .lcd > div {
    display: grid;
    grid-template-rows: 20px 20px;
    align-items: center;
    border-right: 1px solid #2a2e38;
    white-space: nowrap;
  }

  .big { font-size: 15px; font-weight: 400; }
  .time { padding-left: 6px; }
  .time .big { font-variant-numeric: tabular-nums; }

  .pos {
    display: flex;
    justify-content: space-between;
    padding-right: 6px;
    font-size: 15px;
    font-weight: 400;
    font-variant-numeric: tabular-nums;
  }

  .pos s {
    text-decoration: none;
    color: #3b404c;
  }

  .dim { color: #737985; }
  .right { text-align: right; padding-right: 16px; }
  .tempo { padding-right: 6px; }
  .sig { padding-right: 15px; }
  .midi { padding-left: 7px; }

  .load {
    padding: 0 7px 0 5px;
    font-size: 7px;
    color: #6b7180;
  }

  .load div {
    display: flex;
    align-items: center;
    justify-content: space-between;
  }

  .load b {
    width: 40px;
    height: 3px;
    border-radius: 2px;
    background: #3a3f4b;
  }

  .load .some { background: linear-gradient(90deg, #7d8594 5px, #3a3f4b 5px); }

  .main {
    display: flex;
  }

  /* inspector */
  aside {
    flex: none;
    width: 152px;
    border-right: 2px solid #000;
    display: flex;
    flex-direction: column;
    overflow: hidden;
    background: #565656;
  }

  .fold {
    display: flex;
    align-items: center;
    height: 32px;
    padding-left: 7px;
    border-bottom: 1px solid #333;
    background: #4a4a4a;
    font-size: 10px;
    white-space: nowrap;
  }

  .fold span { margin-left: 9px; color: #bbb; }
  .fold b { margin-left: 4px; font-weight: 600; color: #fff; }
  .fold .icon + b { margin-left: 9px; }
  .fold.low { height: 19px; background: #565656; border: 0; }

  .activate {
    display: flex;
    align-items: center;
    justify-content: space-between;
    height: 26px;
    padding: 0 11px 0 10px;
    border-bottom: 1px solid #3a3a3a;
  }

  .activate label {
    display: flex;
    align-items: center;
    gap: 6px;
    white-space: nowrap;
    font-size: 9px;
    font-weight: 600;
  }

  .activate button {
    width: 27px;
    height: 14px;
    gap: 2px;
    border-radius: 3px;
    background: #6a6a6a;
  }

  input[type='checkbox'] {
    appearance: none;
    display: block;
    width: 10px;
    height: 10px;
    border-radius: 2px;
    background: #2f74c8;
    position: relative;
  }

  input[type='checkbox']::after {
    content: '';
    position: absolute;
    left: 3px;
    top: 1px;
    width: 4px;
    height: 6px;
    border: solid #fff;
    border-width: 0 1px 1px 0;
    transform: rotate(40deg);
  }

  input.empty { background: #666; }
  input.empty::after { display: none; }
  input.faded { opacity: .7; }

  table {
    width: 155px;
    table-layout: fixed;
    border-collapse: collapse;
    background: #3d3d3d;
    font-size: 10px;
  }

  th {
    height: 27px;
    padding: 0;
    background: #4a4a4a;
    border-right: 1px solid #424242;
    font-weight: 600;
    color: #ccc;
  }

  td {
    height: 18px;
    padding: 0;
    border-right: 1px solid #363636;
    color: #fff;
  }

  th:nth-child(1) { width: 50px; }
  th:nth-child(2) { width: 48px; }
  th:nth-child(3) { width: 34px; }
  td input { margin: 0 auto; }
  td .empty { margin-left: 11px; }
  td.num { text-align: right; padding-right: 9px; font-size: 11px; }
  td.abbr { padding-left: 6px; }

  .prop {
    display: flex;
    align-items: center;
    height: 17px;
    padding-right: 7px;
    font-size: 9px;
    white-space: nowrap;
    color: #aaa;
  }

  .props { border-bottom: 1px solid #2e2e2e; }
  .prop.odd { background: #4f4f4f; }
  .prop span { width: 82px; text-align: right; margin-right: 5px; }
  .prop em { flex: 1; font-style: normal; font-weight: 700; color: #fff; }
  .prop em.off { font-weight: 500; color: #aaa; }
  .prop.iconrow { height: 34px; }

  .iconrow button {
    width: 31px;
    height: 23px;
    border-radius: 3px;
    background: #4a9bf8;
    color: #2b5c96;
  }

  .mixer {
    flex: 1;
    display: grid;
    grid-template-columns: 75px 75px;
  }

  .channel {
    display: flex;
    flex-direction: column;
    align-items: center;
    justify-content: flex-end;
    padding: 0 8px 3px;
    box-shadow: inset -1px 0 #474747;
  }

  .slot {
    width: 57px;
    height: 14px;
    border-radius: 3px;
    background: #686868;
    color: #fff;
    font-size: 9px;
    box-shadow: 0 1px 1px #0005;
    flex: none;
  }

  .slot.dull { color: #222; }
  .slot.dark { background: #4d4d4d; color: #1c1c1c; box-shadow: none; }
  .slot.fx { margin: 8px 0; }
  .slot.group { height: 15px; margin-top: 4px; background: #505050; color: #1c1c1c; box-shadow: none; border-radius: 0; }
  .slot.read { margin: 5px 0 6px; color: #7fe08f; }
  .slot.split span { margin-left: 3px; border-left: 1px solid #585858; padding-left: 4px; line-height: 14px; }
  .eqthin { width: 58px; height: 8px; margin: 3px 0 1px; background: #4e4e4e; }
  .eq { width: 58px; height: 26px; margin-bottom: 11px; background: #4e4e4e; color: #1c1c1c; font-size: 9px; text-align: center; line-height: 27px; }
  .sends { height: 36px; }
  .sendrow { display: flex; gap: 3px; margin-bottom: 8px; }
  .sendrow .slot { width: 40px; }
  .sendrow i { width: 14px; height: 14px; border-radius: 50%; background: #4d4d4d; }

  .values {
    display: grid;
    grid-template-columns: 1fr 1fr;
    gap: 3px;
    width: 58px;
    margin: 4px 0 17px;
    font-size: 9px;
    text-align: center;
  }

  .values span { height: 15px; line-height: 15px; background: #333; color: #fff; }
  .values .peak { color: #7fe08f; }
  .fader text { fill: #aaa; font-size: 6px; }

  .rec {
    display: flex;
    align-self: flex-end;
    width: 26px;
    margin: 4px 1px 3px;
  }

  .ms {
    display: flex;
    gap: 4px;
  }

  .rec button, .ms button {
    flex: 1;
    height: 14px;
    border-radius: 3px;
    background: #686868;
    color: #fff;
    font-size: 9px;
    box-shadow: 0 1px 1px #0005;
  }

  .ms button { flex: none; width: 26px; }
  .rec .red, .track .red { color: #b8332c; }
  .chname { margin-top: 9px; height: 18px; line-height: 18px; font-size: 9px; color: #fff; white-space: nowrap; }

  /* shared toolbar parts */
  .content {
    flex: 1;
    min-width: 0;
    background: #000;
  }

  .toolbar {
    display: grid;
    grid-template-columns: 1fr auto 1fr;
    align-items: center;
    height: 31px;
    padding: 0 8px;
    background: #484848;
  }

  .left, .end {
    display: flex;
    align-items: center;
    gap: 7px;
  }

  .end { justify-content: flex-end; }

  .seg {
    display: flex;
    height: 17px;
    border-radius: 4px;
    overflow: hidden;
    background: #5e5e5e;
    box-shadow: 0 1px 1px #0004;
  }

  .seg button {
    width: 27px;
    border-right: 1px solid #4f4f4f;
  }

  .seg button:last-child { border: 0; }
  .seg .menu { width: 51px; padding-left: 9px; justify-content: flex-start; gap: 8px; font-size: 10px; font-weight: 700; }
  .seg .menu .icon, .tools .icon + .icon { color: #aaa; }
  .tools button { width: 35px; gap: 4px; color: #fff; }
  .ghost { background: #525252; color: #888; }
  .seg.ghost { box-shadow: none; }
  .blue { background: #2d6fba; color: #fff; }
  .green { background: #2a8b43; color: #fff; }
  .gold { background: #b5893a; color: #fff; }

  .pick {
    display: flex;
    align-items: center;
    gap: 4px;
    font-size: 10px;
    color: #bbb;
    white-space: nowrap;
  }

  .select {
    display: flex;
    align-items: center;
    position: relative;
    height: 17px;
    border-radius: 4px;
    background: #5e5e5e;
    color: #fff;
    box-shadow: 0 1px 1px #0004;
  }

  .select select {
    appearance: none;
    width: 100%;
    height: 100%;
    padding: 0 16px 0 8px;
    font-size: 10px;
    line-height: 17px;
    font-weight: 700;
    outline: none;
  }

  .select .icon {
    position: absolute;
    right: 3px;
    color: #aaa;
    pointer-events: none;
  }

  .snap { width: 149px; }
  .drag { width: 122px; }
  .snap2 { width: 178px; }

  .zoomers {
    display: flex;
    height: 17px;
    border-radius: 4px;
    background: #3c3c3c;
    color: #bbb;
  }

  .zoomers label {
    display: flex;
    align-items: center;
    width: 63px;
    padding-left: 3px;
    gap: 3px;
    border-right: 1px solid #333;
  }

  .zoomers label:last-child { border: 0; }

  input[type='range'] {
    appearance: none;
    display: block;
    height: 17px;
  }

  input.small { width: 38px; }
  input.wide { width: 112px; }

  input[type='range']::-webkit-slider-runnable-track {
    height: 3px;
    border-radius: 2px;
    background: #383838;
  }

  input.small::-webkit-slider-runnable-track { background: #2e2e2e; }

  input[type='range']::-webkit-slider-thumb {
    appearance: none;
    width: 17px;
    height: 17px;
    margin-top: -7px;
    border-radius: 50%;
    background: #959595;
  }

  input.small::-webkit-slider-thumb {
    width: 10px;
    height: 10px;
    margin-top: -4px;
  }

  /* arrange window */
  .arrange-body {
    display: flex;
    height: 531px;
    background: #2e2e2e;
  }

  .heads {
    flex: none;
    width: 276px;
    background: #575757;
  }

  .headtools {
    display: flex;
    align-items: center;
    gap: 9px;
    height: 48px;
    padding: 0 9px 0 8px;
    border-bottom: 1px solid #333;
    background: #484848;
  }

  .headtools button, .regionhead button {
    width: 27px;
    height: 17px;
    border-radius: 4px;
    background: #5a5a5a;
    font-weight: 600;
  }

  .headtools .orange { background: #bf6a28; color: #fff; }
  .headtools .far { margin-left: auto; }

  .marker {
    display: flex;
    align-items: center;
    justify-content: space-between;
    height: 22px;
    padding: 0 4px 1px 17px;
    border-bottom: 1px solid #333;
    font-size: 10px;
    font-weight: 700;
  }

  .marker button {
    width: 12px;
    height: 12px;
    border-radius: 50%;
    background: #fff;
    color: #333;
  }

  .list, .grid {
    display: grid;
    grid-template-rows: repeat(11, minmax(0, 1fr));
    height: 422px;
  }

  .track {
    display: flex;
    align-items: center;
    padding-right: 10px;
    border-bottom: 1px solid #3f3f3f;
    border-left: 4px solid #4a4a4a;
    color: #fff;
  }

  .track.grouped { border-left-color: #fff; }
  .track.selected { background: #717171; }

  .no {
    display: grid;
    place-items: center;
    align-self: stretch;
    width: 17px;
    background: #28a244;
    font-size: 10px;
  }

  .no.audio { background: #3a6ea8; }

  .msr {
    display: flex;
    gap: 1px;
    margin-left: 10px;
  }

  .msr button, .rec1 {
    width: 16px;
    height: 14px;
    background: #696969;
    font-size: 10px;
    font-weight: 600;
    box-shadow: 0 1px 1px #0003;
  }

  .msr button:first-child { border-radius: 3px 0 0 3px; }
  .msr button:last-child { border-radius: 0 3px 3px 0; }
  .rec1 { margin: 0 8px 0 6px; border-radius: 3px; }
  .track .icon { margin-left: 3px; color: #bbb; }
  .tname { font-size: 11px; white-space: nowrap; }

  .track i {
    width: 8px;
    height: 8px;
    margin-left: auto;
    border-radius: 50%;
    background: #363636;
  }

  .lanes, .roll {
    flex: 1;
    min-width: 0;
    position: relative;
    overflow: hidden;
  }

  .ruler text, .roll text { fill: #ddd; }
  .sec { font-size: 9px; }
  text.bar { font-size: 11px; }
  .roll text.clip { font-size: 9px; fill: #2f6a3c; }

  .grid {
    background: repeating-linear-gradient(90deg, #3b3b3b 0 1px, transparent 1px 50px) 8px 0, #2e2e2e;
  }

  .lane { border-bottom: 1px solid #262626; }
  .lane.selected { background: #ffffff0a; }

  .region {
    height: 100%;
    border: 1px solid #0d3517;
    border-radius: 4px;
    overflow: hidden;
    background: #28a244;
    color: #d8ffe0;
    font-size: 9px;
  }

  .region span { display: block; height: 15px; padding-left: 4px; line-height: 15px; }
  .region.active { border-color: #c2ffce; }
  .region.active span { background: #c2ffce; color: #2f6a3c; }

  .playhead {
    position: absolute;
    left: 7px;
    top: 32px;
    bottom: 0;
    width: 2px;
    background: #fff;
    box-shadow: 0 0 0 1px #0008;
  }

  .playhead svg { margin-left: -6px; }
  .roll .playhead { top: 18px; }

  /* piano roll */
  .editor {
    margin-top: 1px;
    border: 2px solid #7ba7de;
    border-bottom-right-radius: 10px;
    overflow: hidden;
    background: #484848;
  }

  .tabs {
    height: 29px;
    padding-top: 4px;
    border-bottom: 1px solid #404040;
  }

  .tabs div {
    display: grid;
    grid-template-columns: 105px 108px 107px;
    width: 320px;
    height: 17px;
    margin: 0 auto;
    border-radius: 4px;
    background: #3e3e3e;
    color: #ccc;
    font-size: 10px;
  }

  .tabs button { border-radius: 4px; font-weight: 600; }
  .tabs .current { background: #2d6fba; color: #fff; }

  .editor .toolbar {
    height: 31px;
    padding: 0 6px 1px;
  }

  output {
    width: 104px;
    height: 17px;
    line-height: 17px;
    border-radius: 4px;
    background: #3e3e3e;
    color: #bbb;
    font-size: 10px;
    text-align: center;
  }

  .editor-body {
    display: flex;
  }

  .panel {
    flex: none;
    width: 174px;
    background: #575757;
  }

  .regionhead {
    display: flex;
    align-items: center;
    height: 37px;
    padding: 0 9px 0 5px;
    background: #484848;
    border-bottom: 1px solid #383838;
    white-space: nowrap;
  }

  .badge {
    display: grid;
    place-items: center;
    width: 25px;
    height: 18px;
    border-radius: 2px;
    background: #30d158;
    color: #14502a;
  }

  .regionhead div { flex: 1; margin-left: 13px; }
  .regionhead b { display: block; font-size: 10px; font-weight: 600; color: #fff; }
  .regionhead small { display: block; margin-top: 2px; font-size: 9px; color: #aaa; }

  .quant {
    display: flex;
    height: 247px;
    border-bottom: 1px solid #000;
  }

  .params { width: 142px; }
  .block { padding: 0 15px; border-bottom: 1px solid #474747; }
  .block.first { height: 139px; padding-top: 9px; }
  .block.second { height: 56px; padding-top: 10px; }
  .block.third { padding-top: 10px; border: 0; }

  .lab {
    display: flex;
    justify-content: space-between;
    height: 13px;
    line-height: 13px;
    font-size: 10px;
    color: #bbb;
    white-space: nowrap;
  }

  .lab b { font-weight: 600; font-size: 11px; color: #fff; }
  .block label { display: block; }
  .block label + label { margin-top: 7px; }
  .block input { margin-top: 4px; }

  .line {
    display: flex;
    gap: 7px;
    margin-top: 3px;
  }

  .first .line { margin-bottom: 8px; }

  .line button {
    width: 27px;
    height: 17px;
    border-radius: 4px;
    background: #6a6a6a;
    color: #fff;
    font-weight: 600;
    font-size: 10px;
    box-shadow: 0 1px 1px #0004;
  }

  .line .select { background: #6a6a6a; }
  .q16 { width: 76px; }
  .qoff { width: 48px; }
  .line button.tiny { width: 21px; }
  .line button.blue { background: #2d6fba; }
  .line button.reg { width: 72px; }
  .keys text { font-size: 9px; fill: #222; font-weight: 600; }

  .auto { padding: 9px 18px 0 15px; }
  .auto .line { margin-top: 4px; }
  .select.vel { margin-top: 13px; height: 18px; background: #464646; color: #7fe08f; box-shadow: none; }
  .select.vel select { text-align: center; text-align-last: center; }
  .select.vel .icon { color: #7fe08f; }
  .velocity { margin-top: 1px; }
</style>
